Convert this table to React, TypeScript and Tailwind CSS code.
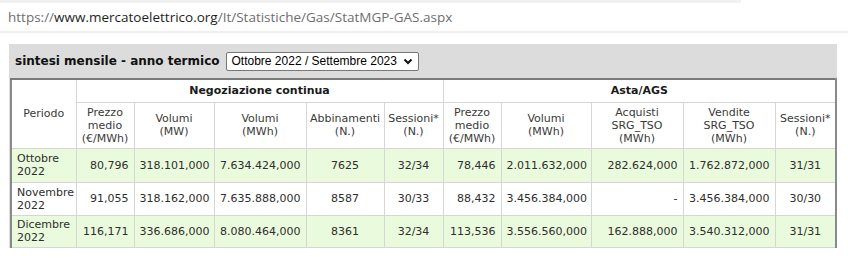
import React from 'react';

interface Row {
  periodo: [string, string];
  ncPrezzo: string;
  ncVolMw: string;
  ncVolMwh: string;
  abbinamenti: string;
  ncSessioni: string;
  asPrezzo: string;
  asVolMwh: string;
  acquisti: string;
  vendite: string;
  asSessioni: string;
  h: string;
}

const rows: Row[] = [
  {
    periodo: ['Ottobre', '2022'],
    ncPrezzo: '80,796',
    ncVolMw: '318.101,000',
    ncVolMwh: '7.634.424,000',
    abbinamenti: '7625',
    ncSessioni: '32/34',
    asPrezzo: '78,446',
    asVolMwh: '2.011.632,000',
    acquisti: '282.624,000',
    vendite: '1.762.872,000',
    asSessioni: '31/31',
    h: 'h-[34px]',
  },
  {
    periodo: ['Novembre', '2022'],
    ncPrezzo: '91,055',
    ncVolMw: '318.162,000',
    ncVolMwh: '7.635.888,000',
    abbinamenti: '8587',
    ncSessioni: '30/33',
    asPrezzo: '88,432',
    asVolMwh: '3.456.384,000',
    acquisti: '-',
    vendite: '3.456.384,000',
    asSessioni: '30/30',
    h: 'h-[33px]',
  },
  {
    periodo: ['Dicembre', '2022'],
    ncPrezzo: '116,171',
    ncVolMw: '336.686,000',
    ncVolMwh: '8.080.464,000',
    abbinamenti: '8361',
    ncSessioni: '32/34',
    asPrezzo: '113,536',
    asVolMwh: '3.556.560,000',
    acquisti: '162.888,000',
    vendite: '3.540.312,000',
    asSessioni: '31/31',
    h: 'h-[32px]',
  },
];

const colWidths = [65, 58, 80, 92, 78, 59, 58, 90, 92, 92, 61];

const th = 'border border-[#d6d6d6] px-[3px] font-normal text-center align-middle leading-[13px] text-[#3a3a3a]';
const thGroup = 'border border-[#d6d6d6] px-[3px] font-bold text-center align-middle leading-[13px] text-[#1a1a1a]';
const td = 'border border-[#d6d6d6] px-[5px] leading-[13px]';

const App = () => {
  return (
    <div className="w-[848px] h-[262px] bg-white overflow-hidden">
      {/* barra indirizzo */}
      <div className="h-[3px] w-[741px] bg-[#f1f1f1]" />
      <div className="h-[30px] flex items-center pl-[8px] border-b-[2px] border-[#f0f0f0] font-['Open_Sans',sans-serif] text-[13.5px] text-[#6e6e6e]">
        <span>https://</span>
        <span className="text-[#1e1e1e]">www.mercatoelettrico.org</span>
        <span>/It/Statistiche/Gas/StatMGP-GAS.aspx</span>
      </div>

      <div className="mt-[11px] ml-[9px] w-[828px] bg-[#dcdcdc] pl-px pr-[2px]">
        <div className="h-[34px] flex items-center gap-[6px] pl-[5px]">
          <span className="font-['DejaVu_Sans',sans-serif] font-bold text-[12px] text-[#111]">
            sintesi mensile - anno termico
          </span>
          <div className="h-[19px] flex items-center gap-[6px] bg-white border border-[#777] rounded-[2px] pl-[5px] pr-[5px] font-['Liberation_Sans',Arial,sans-serif] text-[12px] text-black">
            <span>Ottobre 2022 / Settembre 2023</span>
            <svg width="10" height="7" viewBox="0 0 10 7">
              <path d="M1.5 1.5 L5 5 L8.5 1.5" stroke="#111" strokeWidth="2" fill="none" />
            </svg>
          </div>
        </div>

        <table className="table-fixed w-[825px] border-collapse bg-white font-['DejaVu_Sans',Verdana,sans-serif] text-[11px] text-[#2e2e2e] border-t-[2px] border-t-[#7a7a7a] border-l-[2px] border-l-[#8a8a8a] border-r-[2px] border-r-[#8a8a8a]">
          <colgroup>
            {colWidths.map((w, i) => (
              <col key={i} style={{ width: w }} />
            ))}
          </colgroup>
          <thead>
            <tr className="h-[23px]">
              <th rowSpan={2} className={th}>Periodo</th>
              <th colSpan={5} className={thGroup}>Negoziazione continua</th>
              <th colSpan={5} className={thGroup}>Asta/AGS</th>
            </tr>
            <tr className="h-[46px]">
              <th className={th}>Prezzo<br />medio<br />(€/MWh)</th>
              <th className={th}>Volumi<br />(MW)</th>
              <th className={th}>Volumi<br />(MWh)</th>
              <th className={th}>Abbinamenti<br />(N.)</th>
              <th className={th}>Sessioni*<br />(N.)</th>
              <th className={th}>Prezzo<br />medio<br />(€/MWh)</th>
              <th className={th}>Volumi<br />(MWh)</th>
              <th className={th}>Acquisti<br />SRG_TSO<br />(MWh)</th>
              <th className={th}>Vendite<br />SRG_TSO<br />(MWh)</th>
              <th className={th}>Sessioni*<br />(N.)</th>
            </tr>
          </thead>
          <tbody>
            {rows.map((r, i) => (
              <tr key={i} className={`${r.h} ${i % 2 === 0 ? 'bg-[#eafadd]' : 'bg-white'}`}>
                <td className={`${td} text-left`}>{r.periodo[0]}<br />{r.periodo[1]}</td>
                <td className={`${td} text-right`}>{r.ncPrezzo}</td>
                <td className={`${td} text-right`}>{r.ncVolMw}</td>
                <td className={`${td} text-right`}>{r.ncVolMwh}</td>
                <td className={`${td} text-center`}>{r.abbinamenti}</td>
                <td className={`${td} text-center`}>{r.ncSessioni}</td>
                <td className={`${td} text-right`}>{r.asPrezzo}</td>
                <td className={`${td} text-right`}>{r.asVolMwh}</td>
                <td className={`${td} text-right`}>{r.acquisti}</td>
                <td className={`${td} text-right`}>{r.vendite}</td>
                <td className={`${td} text-center`}>{r.asSessioni}</td>
              </tr>
            ))}
          </tbody>
        </table>
      </div>
    </div>
  );
};

export default App;
